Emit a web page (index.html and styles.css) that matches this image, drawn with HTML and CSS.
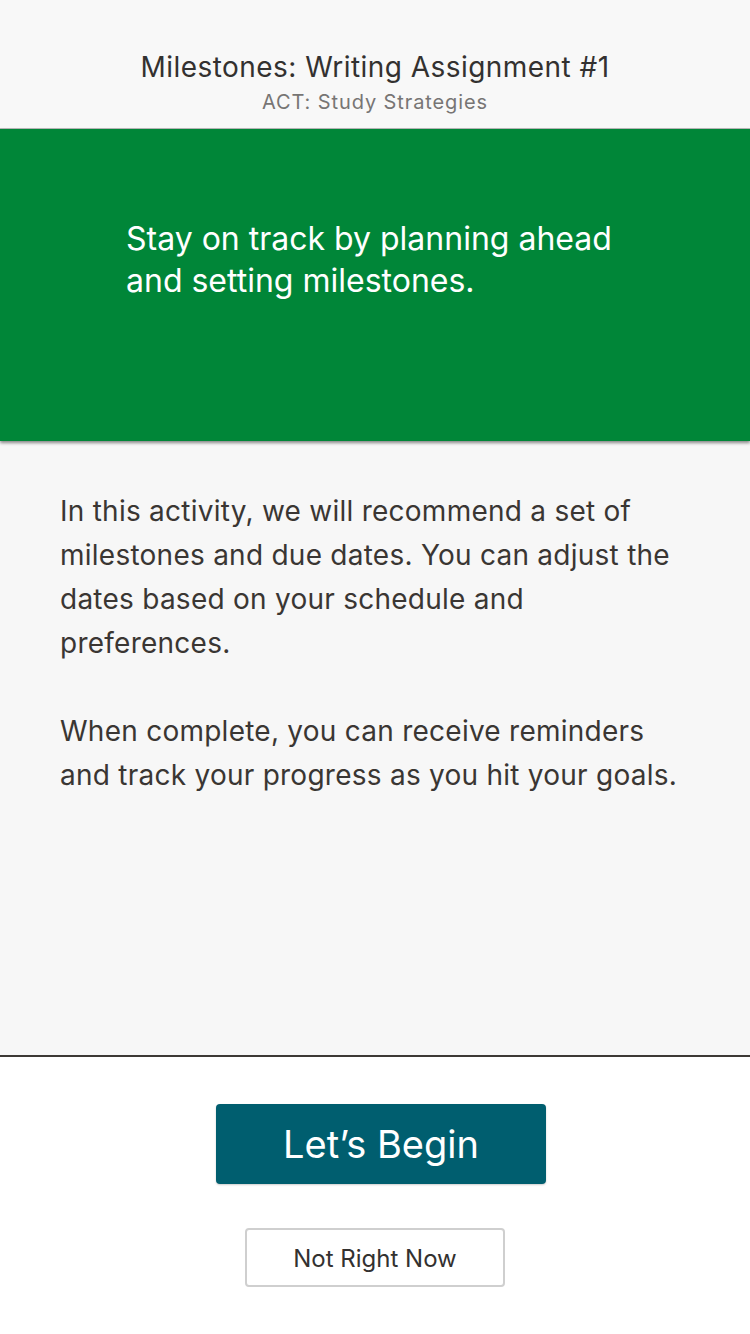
FILE: index.html
```html
<!DOCTYPE html>
<html>
<head>
<meta charset="utf-8">
<link rel="stylesheet" href="styles.css">
</head>
<body>
<div class="screen">
  <header class="header">
    <div class="title">Milestones: Writing Assignment #1</div>
    <div class="subtitle">ACT: Study Strategies</div>
  </header>
  <section class="hero">
    <p>Stay on track by planning ahead and setting milestones.</p>
  </section>
  <main class="content">
    <p>In this activity, we will recommend a set of milestones and due dates. You can adjust the dates based on your schedule and preferences.</p>
    <p>When complete, you can receive reminders and track your progress as you hit your goals.</p>
  </main>
  <footer class="footer">
    <button class="primary">Let’s Begin</button>
    <button class="secondary">Not Right Now</button>
  </footer>
</div>
</body>
</html>
```
FILE: styles.css
```css
* { box-sizing: border-box; }
html, body { margin: 0; padding: 0; }
body {
  width: 750px;
  height: 1334px;
  font-family: Inter, "Noto Sans", sans-serif;
  background: #ffffff;
  overflow: hidden;
}
.screen {
  display: flex;
  flex-direction: column;
  height: 1334px;
}
.header {
  height: 129px;
  background: #f8f8f8;
  border-bottom: 1px solid #b9b9b9;
  display: flex;
  flex-direction: column;
  align-items: center;
  padding-top: 49px;
}
.title {
  font-size: 28px;
  line-height: 36px;
  color: #333130;
  letter-spacing: 0.45px;
}
.subtitle {
  font-size: 20px;
  line-height: 26px;
  color: #777574;
  margin-top: 4px;
  letter-spacing: 0.9px;
}
.hero {
  height: 312px;
  background: #008638;
  padding: 89px 100px 0 126px;
  box-shadow: 0 2px 3px rgba(0,0,0,0.45);
  position: relative;
  z-index: 1;
}
.hero p {
  margin: 0;
  color: #ffffff;
  font-size: 32px;
  line-height: 42px;
}
.content {
  flex: 1;
  background: #f7f7f7;
  padding: 48px 60px 0 60px;
  border-bottom: 2px solid #3d3935;
}
.content p {
  margin: 0 0 44px 0;
  color: #3a3633;
  font-size: 28px;
  line-height: 44px;
  letter-spacing: 0.25px;
}
.footer {
  height: 277px;
  background: #ffffff;
  display: flex;
  flex-direction: column;
  align-items: center;
  padding-top: 47px;
}
.primary {
  width: 330px;
  height: 80px;
  margin-left: 12px;
  background: #005e6f;
  color: #ffffff;
  border: none;
  border-radius: 4px;
  font-family: inherit;
  font-size: 38px;
  box-shadow: 0 1px 2px rgba(0,0,0,0.2);
}
.secondary {
  margin-top: 44px;
  width: 260px;
  height: 59px;
  background: #ffffff;
  color: #333130;
  border: 2px solid #cfcfcf;
  border-radius: 4px;
  font-family: inherit;
  font-size: 24px;
  padding-top: 3px;
}
```
